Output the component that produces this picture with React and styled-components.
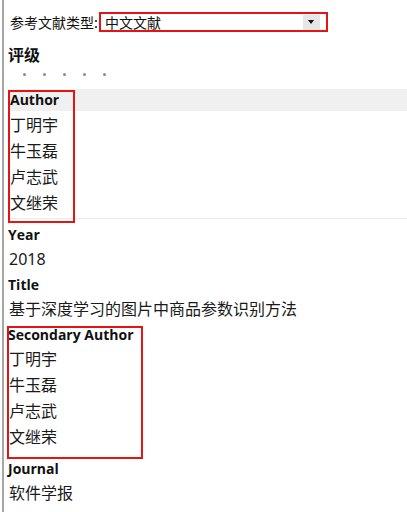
import React from "react";
import styled, { createGlobalStyle } from "styled-components";

const GlobalStyle = createGlobalStyle`
  html, body {
    margin: 0;
    padding: 0;
    background: #ffffff;
  }
  body {
    font-family: "Noto Sans", "Noto Sans CJK SC", sans-serif;
    color: #111111;
  }
`;

const Frame = styled.div`
  margin-left: 2px;
  border-left: 2px solid #a6a6a6;
  min-height: 512px;
  padding: 12px 0 0 4px;
  box-sizing: border-box;
`;

const TypeRow = styled.div`
  display: flex;
  align-items: center;
  height: 20px;
  padding-left: 2px;
`;

const TypeLabel = styled.span`
  font-family: "Noto Sans CJK SC", sans-serif;
  font-size: 14px;
  line-height: 20px;
  margin-right: 1px;
`;

const Select = styled.div`
  width: 229px;
  height: 20px;
  box-sizing: border-box;
  border: 2px solid #e31414;
  display: flex;
  align-items: center;
  justify-content: space-between;
  padding: 0 6px 0 4px;
  background: #ffffff;
`;

const SelectValue = styled.span`
  font-family: "Noto Sans CJK SC", sans-serif;
  font-size: 14px;
  line-height: 16px;
`;

const DropButton = styled.span`
  width: 17px;
  height: 15px;
  background: #e6e6e6;
  display: flex;
  align-items: center;
  justify-content: center;
`;

const Arrow = styled.span`
  width: 0;
  height: 0;
  border-left: 3.5px solid transparent;
  border-right: 3.5px solid transparent;
  border-top: 4px solid #111111;
`;

const Heading = styled.div`
  margin-top: 12px;
  font-family: "Noto Sans CJK SC", sans-serif;
  font-size: 16px;
  font-weight: 700;
  line-height: 20px;
`;

const Stars = styled.div`
  display: flex;
  gap: 17px;
  align-items: center;
  height: 20px;
  padding-left: 15px;
  margin-bottom: 5px;
`;

const Dot = styled.span`
  width: 3px;
  height: 3px;
  border-radius: 50%;
  background: #8a8a8a;
`;

const Field = styled.section`
  position: relative;
  margin-top: ${p => (p.$first ? "0" : p.$afterActive ? "5px" : "2px")};
  padding-bottom: ${p => (p.$active ? "2px" : p.$multi ? "6px" : "0")};
  border-bottom: ${p => (p.$active ? "1px solid #ebebeb" : "none")};
`;

const FieldLabel = styled.div`
  height: 22px;
  line-height: 22px;
  font-family: "Open Sans", "Noto Sans CJK SC", sans-serif;
  font-size: 14px;
  font-weight: 700;
  padding-left: ${p => (p.$active ? "2px" : "0")};
  background: ${p => (p.$active ? "#f0f0f0" : "transparent")};
`;

const ValueList = styled.div`
  display: flex;
  flex-direction: column;
  padding-top: ${p => (p.$active ? "1px" : "0")};
`;

const Value = styled.div`
  height: 26px;
  line-height: 26px;
  font-family: "Noto Sans", "Noto Sans CJK SC", sans-serif;
  font-size: 16px;
  padding-left: ${p => (p.$active ? "2px" : "1px")};
  color: #1a1a1a;
`;

const Mark = styled.div`
  position: absolute;
  pointer-events: none;
  border: 2px solid #e31414;
  box-sizing: border-box;
`;

const authors = ["丁明宇", "牛玉磊", "卢志武", "文继荣"];

function Entry({ label, values, active, multi, first, afterActive, mark }) {
  return (
    <Field $active={active} $multi={multi} $first={first} $afterActive={afterActive}>
      <FieldLabel $active={active}>{label}</FieldLabel>
      <ValueList $active={active}>
        {values.map(v => (
          <Value key={v} $active={active}>
            {v}
          </Value>
        ))}
      </ValueList>
      {mark && <Mark style={mark} />}
    </Field>
  );
}

export default function App() {
  return (
    <>
      <GlobalStyle />
      <Frame>
        <TypeRow>
          <TypeLabel>参考文献类型:</TypeLabel>
          <Select>
            <SelectValue>中文文献</SelectValue>
            <DropButton>
              <Arrow />
            </DropButton>
          </Select>
        </TypeRow>

        <Heading>评级</Heading>
        <Stars>
          {[0, 1, 2, 3, 4].map(i => (
            <Dot key={i} />
          ))}
        </Stars>

        <Entry
          first
          active
          multi
          label="Author"
          values={authors}
          mark={{ top: 1, left: 0, width: 67, height: 133 }}
        />
        <Entry afterActive label="Year" values={["2018"]} />
        <Entry label="Title" values={["基于深度学习的图片中商品参数识别方法"]} />
        <Entry
          multi
          label="Secondary Author"
          values={authors}
          mark={{ top: 2, left: -1, width: 136, height: 133 }}
        />
        <Entry label="Journal" values={["软件学报"]} />
      </Frame>
    </>
  );
}
